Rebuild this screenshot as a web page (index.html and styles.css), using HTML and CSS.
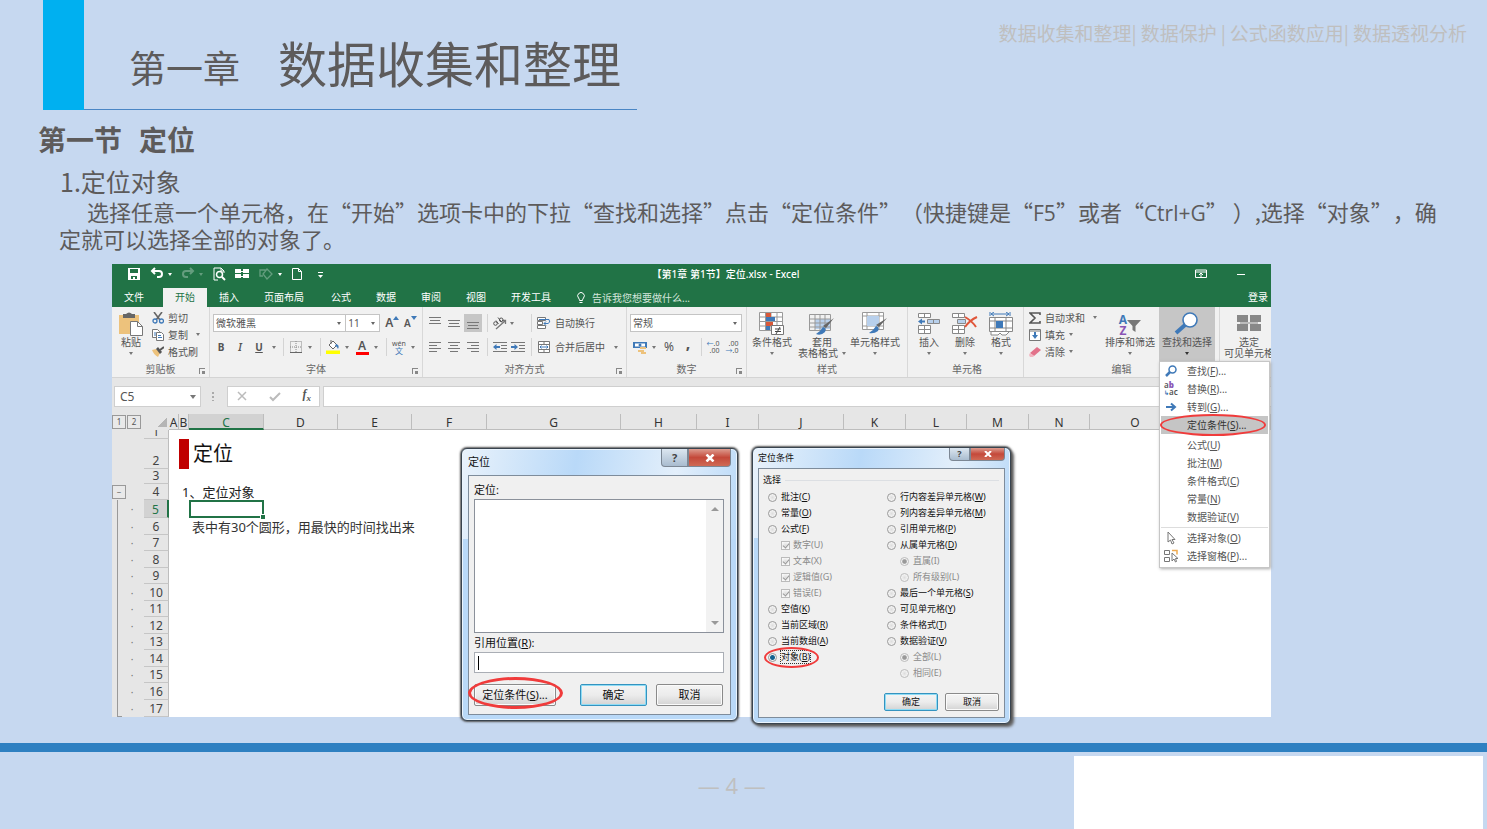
FILE: index.html
```html
<!DOCTYPE html>
<html lang="zh-CN">
<head>
<meta charset="utf-8">
<title>第一章 数据收集和整理</title>
<link rel="stylesheet" href="styles.css">
</head>
<body>
<div class="slide">
  <header class="slide-head">
    <span class="accent"></span>
    <h1 class="chapter"><span class="chapter-no">第一章</span><span>数据收集和整理</span></h1>
    <p class="topics"><span>数据收集和整理|</span><span>数据保护</span><span>|</span><span>公式函数应用|</span><span>数据透视分析</span></p>
  </header>

  <section class="lesson">
    <h2>第一节<span class="word-gap"></span>定位</h2>
    <h3>1.定位对象</h3>
    <p>选择任意一个单元格，在“开始”选项卡中的下拉“查找和选择”点击“定位条件”（快捷键是“<kbd>F5</kbd>”或者“<kbd>Ctrl+G</kbd>” ）,选择“对象”，确定就可以选择全部的对象了。</p>
  </section>

  <main class="workbook">
    <div class="titlebar">
      <div class="quick">
        <svg width="14" height="14" viewBox="0 0 14 14"><path d="M1 1h12v12H1z" fill="#fff"/><path d="M3 2h8v4H3zM4 9h6v3H8V10H6v2H4z" fill="#217346"/></svg>
        <svg width="14" height="14" viewBox="0 0 14 14"><path d="M5 1 2 4l3 3M2 4h7q3 0 3 3t-3 3H7" fill="none" stroke="#fff" stroke-width="2"/></svg>
        <i class="caret white"></i>
        <svg class="dim" width="14" height="14" viewBox="0 0 14 14"><path d="M9 1l3 3-3 3M12 4H5Q2 4 2 7t3 3h2" fill="none" stroke="#fff" stroke-width="2"/></svg>
        <i class="caret white dim"></i>
        <svg width="14" height="14" viewBox="0 0 14 14"><path d="M12 6V4L9 1H2v12h4M9 1v3h3" fill="none" stroke="#fff"/><circle cx="7.500" cy="7.500" r="3" fill="none" stroke="#fff" stroke-width="1.500"/><path d="M10 10l3 3" stroke="#fff" stroke-width="2"/></svg>
        <svg width="14" height="14" viewBox="0 0 14 14"><path d="M0 2h6v4H0zM8 2h6v4H8zM0 7h6v4H0zM8 7h6v4H8z" fill="#fff"/><path d="M5 4.500h5M5 9.500h5" stroke="#fff"/></svg>
        <svg class="dim" width="16" height="14" viewBox="0 0 16 14"><path d="M5 9H2V3h5v2M9 2l5 5-5 5-4-5z" fill="none" stroke="#fff" stroke-width="1.300"/></svg>
        <i class="caret white"></i>
        <svg width="12" height="14" viewBox="0 0 12 14"><path d="M1.500 1.500h6l3 3v8h-9zM7.500 1.500v3h3" fill="none" stroke="#fff"/></svg>
        <svg class="more" width="8" height="10" viewBox="0 0 8 10"><path d="M1 3.500h5" stroke="#fff"/><path d="M1 6h5L3.500 9z" fill="#fff"/></svg>
      </div>
      <strong class="file-name">【第1章 第1节】定位.xlsx - Excel</strong>
      <div class="window-tools">
        <svg width="12" height="10" viewBox="0 0 12 10"><path d="M.5 1h11v7.500H.5zM.5 3h11M6 8V4.500M4 6l2-2 2 2" fill="none" stroke="#fff"/></svg>
        <svg width="10" height="10" viewBox="0 0 10 10"><path d="M1 5.500h8" stroke="#fff"/></svg>
      </div>
    </div>

    <nav class="tabs">
      <a href="#">文件</a><a href="#" class="on">开始</a><a href="#">插入</a><a href="#" class="long">页面布局</a><a href="#">公式</a><a href="#">数据</a><a href="#">审阅</a><a href="#">视图</a><a href="#">开发工具</a>
      <a href="#" class="tell"><svg width="10" height="12" viewBox="0 0 10 12"><path d="M3.500 8.500Q3.500 7 2.500 6a3.300 3.300 0 1 1 5 0Q6.500 7 6.500 8.500zM3.500 10.500h3" fill="none" stroke="#fff"/></svg>告诉我您想要做什么...</a>
      <a href="#" class="login">登录</a>
    </nav>

    <div class="ribbon">
      <section class="group clip">
        <div class="body">
          <button class="big paste"><svg width="26" height="24" viewBox="0 0 26 24"><path d="M1 3h20v19H1z" fill="#edc27c"/><path d="M5 2h3q3-3 6 0h3v4H5z" fill="#666"/><path d="M12.500 9.500h7l5 5v9h-12z" fill="#fff" stroke="#777"/><path d="M19.500 9.500v5h5" fill="none" stroke="#777"/></svg><span>粘贴</span><i class="caret"></i></button>
          <div class="stack">
            <button><svg width="12" height="12" viewBox="0 0 12 12"><path d="M2 0l6 8M10 0L4 8" stroke="#666" stroke-width="1.600"/><circle cx="3" cy="9" r="2" fill="none" stroke="#3f79b8" stroke-width="1.300"/><circle cx="9.500" cy="9" r="2" fill="none" stroke="#3f79b8" stroke-width="1.300"/></svg>剪切</button>
            <button><svg width="12" height="12" viewBox="0 0 12 12"><path d="M.5.500h5l2 2v6h-7z" fill="#fff" stroke="#777"/><path d="M4.500 3.500h5l2 2v6h-7z" fill="#fff" stroke="#777"/><path d="M6 6.500h3M6 8.500h4M2 4h2M2 6h2" stroke="#3f79b8"/></svg>复制<i class="caret far"></i></button>
            <button><svg width="12" height="12" viewBox="0 0 12 12"><path d="M0 4l4-1 4 4-2 4q-4-2-6-7z" fill="#edc27c"/><path d="M4 3l2-2 4 5-2 2z" fill="#555"/><path d="M8 4l4-3" stroke="#555" stroke-width="2"/></svg>格式刷</button>
          </div>
        </div>
        <div class="caption">剪贴板<b class="corner"></b></div>
      </section>

      <section class="group font">
        <div class="body rows">
          <div class="line">
            <label class="pick face"><select aria-label="字体"><option>微软雅黑</option></select></label>
            <label class="pick size"><select aria-label="字号"><option>11</option></select></label>
            <button class="grow">A<svg width="6" height="4" viewBox="0 0 6 4"><path d="M0 4l3-4 3 4z" fill="#3f79b8"/></svg></button>
            <button class="grow small">A<svg width="6" height="4" viewBox="0 0 6 4"><path d="M0 0l3 4 3-4z" fill="#3f79b8"/></svg></button>
          </div>
          <div class="font-tools">
            <button class="bold">B</button><button class="ital">I</button><button class="under">U</button><i class="caret"></i><i class="bar"></i>
            <button aria-label="边框"><svg width="12" height="12" viewBox="0 0 12 12"><path d="M.5.500h11v11H.5zM6 0v12M0 6h12" fill="none" stroke="#888" stroke-dasharray="1 1"/><path d="M0 11.500h12" stroke="#666"/></svg></button><i class="caret"></i><i class="bar"></i>
            <button aria-label="填充颜色"><svg width="14" height="14" viewBox="0 0 14 14"><path d="M3 5l4-4 4 4-4 4z" fill="#fff" stroke="#666"/><path d="M5 4V0" stroke="#666"/><path d="M10 4q4 1 2 5-1-3-3-3z" fill="#3f79b8"/><path d="M0 10.500h14V14H0z" fill="#ff0"/></svg></button><i class="caret"></i>
            <button aria-label="字体颜色" class="ink">A</button><i class="caret"></i><i class="bar"></i>
            <button class="pinyin"><span>wén</span><span class="blue">文</span></button><i class="caret"></i>
          </div>
        </div>
        <div class="caption">字体<b class="corner"></b></div>
      </section>

      <section class="group align">
        <div class="body rows">
          <div class="align-tools">
            <button aria-label="顶端对齐"><svg width="12" height="12" viewBox="0 0 12 12"><path d="M0 .5h12M1 3.500h10M0 6.500h12" stroke="#777"/></svg></button>
            <button aria-label="垂直居中"><svg width="12" height="12" viewBox="0 0 12 12"><path d="M0 3.500h12M1 6.500h10M0 9.500h12" stroke="#777"/></svg></button>
            <button aria-label="底端对齐" class="pressed"><svg width="12" height="12" viewBox="0 0 12 12"><path d="M0 5.500h12M1 8.500h10M0 11.500h12" stroke="#777"/></svg></button>
            <i class="bar"></i>
            <button aria-label="方向"><svg width="16" height="14" viewBox="0 0 16 14"><path d="M4 13l9-8M10 4.500h3.500V8" stroke="#777" fill="none" stroke-width="1.300"/><circle cx="3.500" cy="7.500" r="1.800" fill="none" stroke="#555"/><path d="M4 4.500l2.500 3.500M6 1.500l4 5" stroke="#555"/><circle cx="9.200" cy="3.800" r="1.800" fill="none" stroke="#555"/></svg></button>
            <i class="caret mid"></i><i class="bar"></i>
            <svg width="14" height="12" viewBox="0 0 14 12"><path d="M.5.500h8v3h-8zM.5 4.500h5v3h-5zM.5 8.500h8v3h-8z" fill="#fff" stroke="#777"/><path d="M2 2.500h10q2 3-1 4H7M9 4.500l-2 2 2 2" fill="none" stroke="#3f79b8"/></svg>
            <button class="txt">自动换行</button>
          </div>
          <div class="align-tools">
            <button aria-label="左对齐"><svg width="12" height="12" viewBox="0 0 12 12"><path d="M0 1.500h12M0 4.500h8M0 7.500h12M0 10.500h8" stroke="#777"/></svg></button>
            <button aria-label="居中"><svg width="12" height="12" viewBox="0 0 12 12"><path d="M0 1.500h12M2 4.500h8M0 7.500h12M2 10.500h8" stroke="#777"/></svg></button>
            <button aria-label="右对齐"><svg width="12" height="12" viewBox="0 0 12 12"><path d="M0 1.500h12M4 4.500h8M0 7.500h12M4 10.500h8" stroke="#777"/></svg></button>
            <i class="bar"></i>
            <button aria-label="减少缩进"><svg width="14" height="12" viewBox="0 0 14 12"><path d="M0 1.500h14M8 4.500h6M8 7.500h6M0 10.500h14" stroke="#777"/><path d="M0 6l3.500-3v2H7v2H3.500v2z" fill="#3f79b8"/></svg></button>
            <button aria-label="增加缩进"><svg width="14" height="12" viewBox="0 0 14 12"><path d="M0 1.500h14M8 4.500h6M8 7.500h6M0 10.500h14" stroke="#777"/><path d="M7 6L3.500 3v2H0v2h3.500v2z" fill="#3f79b8"/></svg></button>
            <i class="bar"></i>
            <svg width="12" height="12" viewBox="0 0 12 12"><path d="M.5.500h11v11H.5zM.5 3.500h11M.5 8.500h11M6 0v3.500M6 8.500V12" fill="#fff" stroke="#777"/><path d="M2 6h8M3.500 4.500L2 6l1.500 1.500M8.500 4.500L10 6 8.500 7.500" fill="none" stroke="#3f79b8"/></svg>
            <button class="txt">合并后居中</button><i class="caret"></i>
          </div>
        </div>
        <div class="caption">对齐方式<b class="corner"></b></div>
      </section>

      <section class="group number">
        <div class="body rows">
          <div class="line"><label class="pick wide"><select aria-label="数字格式"><option>常规</option></select></label></div>
          <div class="number-tools">
            <button aria-label="货币"><svg width="14" height="13" viewBox="0 0 14 13"><path d="M0 1h14v6H0z" fill="#3f79b8"/><path d="M2 2.500h10v3H2z" fill="#fff"/><circle cx="7" cy="4" r="1.500" fill="#3f79b8"/><path d="M7 6h6v2H7zM5 9h6v2H5zM8 11h5v2H8z" fill="#edc27c"/></svg></button><i class="caret"></i>
            <button class="pct">%</button><button class="comma">,</button><i class="bar"></i>
            <button aria-label="增加小数位数" class="dec"><span><em>←</em>.0</span><span>.00</span></button>
            <button aria-label="减少小数位数" class="dec"><span>.00</span><span><em>→</em>.0</span></button>
          </div>
        </div>
        <div class="caption">数字<b class="corner"></b></div>
      </section>

      <section class="group styles">
        <div class="body">
          <button class="big"><svg width="26" height="24" viewBox="0 0 26 24"><path d="M.5.500h23v18H.5zM.5 5h23M.5 9.500h23M.5 14h23M6.500 0v19M12 0v19M18 0v19" fill="#fff" stroke="#999"/><path d="M7 1h5v4H7zM7 10h7v4H7z" fill="#d9593a"/><path d="M7 5h9v4H7zM7 14h4v4H7z" fill="#3f79b8"/><path d="M12.500 13.500h12v9h-12z" fill="#fff" stroke="#777"/><path d="M16 17h6M16 19.500h6M21 15l-4 7" stroke="#444"/></svg><span>条件格式</span><i class="caret"></i></button>
          <button class="big"><svg width="26" height="24" viewBox="0 0 26 24"><path d="M6 7h15v10H6z" fill="#b8d0ec"/><path d="M.5 2.500h21v16H.5zM.5 7h21M.5 11h21M.5 15h21M6 2v17M11 2v17M16 2v17" fill="none" stroke="#999"/><path d="M25 6l-8 10-3-2z" fill="#666"/><path d="M14 15q4 1 2 5-4 4-9 2 4-2 7-7z" fill="#3f79b8"/></svg><span>套用</span><span class="second">表格格式<i class="caret"></i></span></button>
          <button class="big"><svg width="26" height="24" viewBox="0 0 26 24"><path d="M.5.500h21v17H.5zM.5 4h21M.5 14h21M5 0v18M17 0v18" fill="#fff" stroke="#999"/><path d="M5 4h12v10H5z" fill="#b8d0ec"/><path d="M25 6l-8 9-3-2z" fill="#666"/><path d="M14 14q4 1 2 5-4 3-9 2 4-2 7-7z" fill="#3f79b8"/></svg><span>单元格样式</span><i class="caret"></i></button>
        </div>
        <div class="caption">样式</div>
      </section>

      <section class="group cells">
        <div class="body">
          <button class="big"><svg width="24" height="24" viewBox="0 0 24 24"><path d="M1.500 1.500h12v4h-12zM7.500 1v5M1.500 13.500h12v8h-12zM7.500 13v9M1 17.500h13" fill="#fff" stroke="#888"/><path d="M10.500 7.500h12v4h-12zM16.500 7v5" fill="#b8d0ec" stroke="#888"/><path d="M1 9.500l4-3v2h3v2H5v2z" fill="#3f79b8"/></svg><span>插入</span><i class="caret"></i></button>
          <button class="big"><svg width="26" height="24" viewBox="0 0 26 24"><path d="M.5 1.500h12v4H.5zM6.500 1v5M.5 13.500h12v8H.5zM6.500 13v9M0 17.500h13" fill="#fff" stroke="#888"/><path d="M5.500 7.500h8v4h-8z" fill="#b8d0ec" stroke="#888"/><path d="M13 5q7 4 11 10M25 5q-7 3-12 10" fill="none" stroke="#e0563a" stroke-width="2"/></svg><span>删除</span><i class="caret"></i></button>
          <button class="big"><svg width="24" height="24" viewBox="0 0 24 24"><path d="M.5 5.500h23v14H.5zM.5 9h23M.5 16h23M6 5v15M17 5v15" fill="#fff" stroke="#888"/><path d="M7 9h7v7H7z" fill="#3f79b8"/><path d="M1 0v4M21 0v4M2 2h18M5 0L2 2l3 2M17 0l3 2-3 2" fill="none" stroke="#3f79b8"/><path d="M2 20v3h7l2-2 2 2h4l3-3" fill="#fff" stroke="#888"/></svg><span>格式</span><i class="caret"></i></button>
        </div>
        <div class="caption">单元格</div>
      </section>

      <section class="group edit">
        <div class="body">
          <div class="stack">
            <button><svg width="12" height="12" viewBox="0 0 12 12"><path d="M11 3V1H1l5 5-5 5h10V9" fill="none" stroke="#555" stroke-width="1.600"/></svg>自动求和<i class="caret far"></i></button>
            <button><svg width="12" height="12" viewBox="0 0 12 12"><path d="M.5.500h11v11H.5z" fill="#fff" stroke="#777"/><path d="M.5 2h11" stroke="#777"/><path d="M5 3h2v3h2l-3 4-3-4h2z" fill="#3f79b8"/></svg>填充<i class="caret"></i></button>
            <button><svg width="12" height="12" viewBox="0 0 12 12"><path d="M1 7l7-6 4 3-7 6z" fill="#e2728a"/><path d="M1 7l4 3-1 1H1L0 9z" fill="#f2b4c0"/></svg>清除<i class="caret"></i></button>
          </div>
          <button class="big"><span class="sort"><span class="az"><b>A</b><b>Z</b></span><svg width="14" height="14" viewBox="0 0 14 14"><path d="M0 2h14L8.500 8v6l-3-2V8z" fill="#777"/></svg></span><span>排序和筛选</span><i class="caret"></i></button>
          <div class="find">
            <button class="big pressed"><svg width="26" height="24" viewBox="0 0 26 24"><path d="M11 13L2 21" stroke="#3f79b8" stroke-width="4"/><circle cx="16" cy="8" r="7" fill="#fff" stroke="#3f79b8" stroke-width="1.600"/></svg><span>查找和选择</span><i class="caret dark"></i></button>
            <ul class="menu">
              <li><button><svg width="14" height="14" viewBox="0 0 14 14"><path d="M6 8l-4 4" stroke="#3f79b8" stroke-width="2.500"/><circle cx="8.500" cy="5.500" r="3.500" fill="#fff" stroke="#3f79b8" stroke-width="1.500"/></svg>查找(<u>F</u>)...</button></li>
              <li><button><span class="abac"><span>a<b>b</b></span><span><em>↳</em>ac</span></span>替换(<u>R</u>)...</button></li>
              <li><button><svg width="14" height="14" viewBox="0 0 14 14"><path d="M2 7h9M7 3.500L11 7l-4 3.500" fill="none" stroke="#3f79b8" stroke-width="2"/></svg>转到(<u>G</u>)...</button></li>
              <li class="chosen"><button><i></i>定位条件(<u>S</u>)...</button><span class="ring"></span></li>
              <li><button><i></i>公式(<u>U</u>)</button></li>
              <li><button><i></i>批注(<u>M</u>)</button></li>
              <li><button><i></i>条件格式(<u>C</u>)</button></li>
              <li><button><i></i>常量(<u>N</u>)</button></li>
              <li><button><i></i>数据验证(<u>V</u>)</button></li>
              <li class="split"><button><svg width="14" height="14" viewBox="0 0 14 14"><path d="M4 1v10l2.500-2 1.500 4 2-1-2-3.500h3z" fill="#fff" stroke="#777"/></svg>选择对象(<u>O</u>)</button></li>
              <li><button><svg width="14" height="14" viewBox="0 0 14 14"><path d="M.5 1.500h5v4h-5zM.5 8.500h5v4h-5z" fill="#fff" stroke="#777"/><path d="M8 1.500h5v4" fill="none" stroke="#eeaa50" stroke-width="1.500"/><path d="M8 4v8l2-2 1.500 3 1-.5-1-3H14z" fill="#fff" stroke="#777"/></svg>选择窗格(<u>P</u>)...</button></li>
            </ul>
          </div>
        </div>
        <div class="caption">编辑</div>
      </section>

      <section class="group visible">
        <div class="body">
          <button class="big"><svg width="24" height="24" viewBox="0 0 24 24"><path d="M0 3h11v7H0zM13 3h11v7H13zM0 12h11v7H0zM13 12h11v7H13z" fill="#888"/><path d="M3 11h18" stroke="#888"/></svg><span>选定</span><span class="second">可见单元格</span></button>
        </div>
      </section>
    </div>

    <div class="formula">
      <label class="name-box"><input value="C5" aria-label="名称框"></label>
      <span class="dots"></span>
      <div class="entry-tools">
        <svg width="12" height="12" viewBox="0 0 12 12"><path d="M2 2l8 8M10 2l-8 8" stroke="#bbb" stroke-width="1.500"/></svg>
        <svg width="12" height="12" viewBox="0 0 12 12"><path d="M1 7l3 3 7-7" fill="none" stroke="#bbb" stroke-width="2"/></svg>
        <button class="fx">f<sub>x</sub></button>
      </div>
      <input class="formula-input" aria-label="编辑栏">
    </div>

    <table class="sheet">
      <colgroup><col class="w15"><col class="w17"><col class="w25"><col class="w10"><col class="w10"><col class="w75"><col class="w74"><col class="w74"><col class="w75"><col class="w134"><col class="w76"><col class="w62"><col class="w85"><col class="w62"><col class="w61"><col class="w62"><col class="w61"><col class="w91"><col></colgroup>
      <thead><tr><td class="lvl"><button>1</button></td><td class="lvl"><button>2</button></td><td class="all"></td><th>A</th><th>B</th><th class="on">C</th><th>D</th><th>E</th><th>F</th><th>G</th><th>H</th><th>I</th><th>J</th><th>K</th><th>L</th><th>M</th><th>N</th><th>O</th><th></th></tr></thead>
      <tbody>
        <tr class="r1"><td class="g" colspan="2"></td><th><span>1</span></th><td colspan="16"></td></tr>
        <tr class="r2"><td class="g" colspan="2"></td><th>2</th><td></td><td class="red"></td><td colspan="14" class="sheet-title">定位</td></tr>
        <tr class="r3"><td class="g" colspan="2"></td><th>3</th><td colspan="16"></td></tr>
        <tr class="r4"><td class="g lvl"><button>−</button></td><td class="g"></td><th>4</th><td></td><td colspan="15" class="topic">1、定位对象</td></tr>
        <tr class="r5"><td class="g rail"></td><td class="g dot">·</td><th class="on">5</th><td></td><td></td><td class="cell-on"><span></span></td><td colspan="13"></td></tr>
        <tr><td class="g rail"></td><td class="g dot">·</td><th>6</th><td></td><td></td><td colspan="14" class="task">表中有30个圆形，用最快的时间找出来</td></tr>
        <tr><td class="g rail"></td><td class="g dot">·</td><th>7</th><td colspan="16"></td></tr>
        <tr><td class="g rail"></td><td class="g dot">·</td><th>8</th><td colspan="16"></td></tr>
        <tr><td class="g rail"></td><td class="g dot">·</td><th>9</th><td colspan="16"></td></tr>
        <tr><td class="g rail"></td><td class="g dot">·</td><th>10</th><td colspan="16"></td></tr>
        <tr><td class="g rail"></td><td class="g dot">·</td><th>11</th><td colspan="16"></td></tr>
        <tr><td class="g rail"></td><td class="g dot">·</td><th>12</th><td colspan="16"></td></tr>
        <tr><td class="g rail"></td><td class="g dot">·</td><th>13</th><td colspan="16"></td></tr>
        <tr><td class="g rail"></td><td class="g dot">·</td><th>14</th><td colspan="16"></td></tr>
        <tr><td class="g rail"></td><td class="g dot">·</td><th>15</th><td colspan="16"></td></tr>
        <tr><td class="g rail"></td><td class="g dot">·</td><th>16</th><td colspan="16"></td></tr>
        <tr class="r17"><td class="g rail end"></td><td class="g dot">·</td><th>17</th><td colspan="16"></td></tr>
      </tbody>
    </table>

    <section class="dialog goto">
      <header><h4>定位</h4><button class="help">?</button><button class="close" aria-label="关闭"><svg width="10" height="8" viewBox="0 0 10 8"><path d="M1.500.500l7 7M8.500.500l-7 7" stroke="#fff" stroke-width="2.500"/></svg></button></header>
      <div class="panel">
        <label for="places">定位:</label>
        <div class="list-wrap"><select id="places" size="4"></select><span class="scroll"><i class="up"></i><i class="caret"></i></span></div>
        <label for="ref">引用位置(<u>R</u>):</label>
        <div class="ref"><i class="cursor"></i><input id="ref"></div>
        <div class="actions"><div class="circled"><button>定位条件(<u>S</u>)...</button><span class="ring"></span></div><button class="ok">确定</button><button>取消</button></div>
      </div>
    </section>

    <section class="dialog special">
      <header><h4>定位条件</h4><button class="help">?</button><button class="close" aria-label="关闭"><svg width="8" height="6" viewBox="0 0 8 6"><path d="M1 0l6 6M7 0L1 6" stroke="#fff" stroke-width="2"/></svg></button></header>
      <div class="panel">
        <div class="legend">选择</div>
        <div class="choices">
          <div>
            <label><input type="radio" name="k">批注(<u>C</u>)</label>
            <label><input type="radio" name="k">常量(<u>O</u>)</label>
            <label><input type="radio" name="k">公式(<u>F</u>)</label>
            <label class="sub"><input type="checkbox" checked disabled>数字(U)</label>
            <label class="sub"><input type="checkbox" checked disabled>文本(X)</label>
            <label class="sub"><input type="checkbox" checked disabled>逻辑值(G)</label>
            <label class="sub"><input type="checkbox" checked disabled>错误(E)</label>
            <label><input type="radio" name="k">空值(<u>K</u>)</label>
            <label><input type="radio" name="k">当前区域(<u>R</u>)</label>
            <label><input type="radio" name="k">当前数组(<u>A</u>)</label>
            <label class="circled"><input type="radio" name="k" checked><span class="focus">对象(<u>B</u>)</span><span class="ring"></span></label>
          </div>
          <div>
            <label><input type="radio" name="k">行内容差异单元格(<u>W</u>)</label>
            <label><input type="radio" name="k">列内容差异单元格(<u>M</u>)</label>
            <label><input type="radio" name="k">引用单元格(<u>P</u>)</label>
            <label><input type="radio" name="k">从属单元格(<u>D</u>)</label>
            <label class="sub"><input type="radio" name="d" checked disabled>直属(I)</label>
            <label class="sub"><input type="radio" name="d" disabled>所有级别(L)</label>
            <label><input type="radio" name="k">最后一个单元格(<u>S</u>)</label>
            <label><input type="radio" name="k">可见单元格(<u>Y</u>)</label>
            <label><input type="radio" name="k">条件格式(<u>T</u>)</label>
            <label><input type="radio" name="k">数据验证(<u>V</u>)</label>
            <label class="sub"><input type="radio" name="v" checked disabled>全部(L)</label>
            <label class="sub"><input type="radio" name="v" disabled>相同(E)</label>
          </div>
        </div>
        <div class="actions"><button class="ok">确定</button><button>取消</button></div>
      </div>
    </section>
  </main>

  <footer class="slide-foot">
    <p class="page-no">— 4 —</p>
    <div class="blank"></div>
  </footer>
</div>
</body>
</html>
```
FILE: styles.css
```css
* { box-sizing: border-box; }
body { margin: 0; background: #c6d8f0; color: #5d5b5b; font-family: "Noto Sans CJK SC", sans-serif; }
h1, h2, h3, h4, p, ul { margin: 0; padding: 0; font-weight: 400; }
button, input, select { font: inherit; color: inherit; border: 0; margin: 0; padding: 0; background: none; border-radius: 0; }
i, em { font-style: normal; }
svg { flex: none; display: block; }
a { color: inherit; text-decoration: none; }

.slide { display: flex; flex-direction: column; min-height: 100vh; }
.slide-head { display: flex; align-items: flex-start; padding-left: 43px; }
.accent { align-self: stretch; width: 41px; background: #00b0f0; }
.chapter { display: flex; align-items: baseline; gap: 38px; padding: 27px 16px 7px 45px; border-bottom: 1px solid #4a86c5; font-size: 49px; line-height: 70px; }
.chapter-no { font-size: 37px; }
.topics { display: flex; gap: 4px; margin-left: auto; padding: 19px 20px 0 0; color: #bfbfbf; font-size: 19px; line-height: 28px; white-space: nowrap; }

.lesson { padding: 9px 36px 0 38px; }
.lesson h2 { font-size: 28px; line-height: 40px; font-weight: 700; }
.word-gap { display: inline-block; width: 17px; }
.lesson h3 { padding: 7px 0 2px 22px; font-size: 25px; line-height: 30px; }
.lesson p { padding-left: 21px; text-indent: 28px; font-size: 22px; line-height: 27px; text-spacing-trim: space-all; }
kbd { font-family: "Open Sans", sans-serif; font-size: 21px; line-height: 1; }

.workbook { position: relative; margin: 12px 216px 26px 112px; background: #fff; font-family: "Noto Sans", "Noto Sans CJK SC", sans-serif; font-size: 10px; line-height: 14px; color: #555; white-space: nowrap; }
.titlebar { display: grid; grid-template-columns: 1fr auto 1fr; align-items: center; height: 20px; background: #217346; color: #fff; }
.quick { display: flex; align-items: center; padding-left: 6px; }
.quick svg { margin-left: 9px; }
.quick .caret { margin-left: 4px; }
.quick .more { margin-left: 14px; }
.file-name { font-weight: 500; padding-left: 68px; }
.window-tools { display: flex; justify-content: flex-end; gap: 29px; padding-right: 25px; }
.dim { opacity: .3; }
.caret { display: inline-block; flex: none; justify-self: center; width: 0; height: 0; border: 2px solid transparent; border-top: 3px solid #777; border-bottom: 0; }
.caret.white { border-top-color: #fff; }
.caret.dark { border-top-color: #333; }
.caret.mid { justify-self: start; margin-left: 2px; }

.tabs { display: flex; height: 23px; padding: 4px 3px 0 0; background: #217346; color: #fff; line-height: 18px; }
.tabs a { padding: 0 13px 0 12px; }
.tabs .on { background: #f1f1f1; color: #217346; padding: 0 12px; margin-left: 6px; }
.tabs .long { padding-right: 15px; }
.tabs .tell { display: flex; align-items: center; gap: 6px; padding-left: 12px; color: #d5e6dc; }
.tabs .login { margin-left: auto; padding: 0; }

.ribbon { display: flex; height: 71px; background: #f1f1f1; border-bottom: 1px solid #d4d4d4; }
.group { display: flex; flex-direction: column; flex: none; border-right: 1px solid #d8d8d8; }
.group .body { display: flex; flex: 1; }
.group .rows { flex-direction: column; padding: 4px 0 0 3px; }
.rows > div { height: 24px; align-items: center; }
.caption { position: relative; height: 16px; line-height: 17px; text-align: center; color: #666; }
.corner { position: absolute; right: 4px; bottom: 3px; width: 6px; height: 6px; border-left: 1px solid #888; border-top: 1px solid #888; background: linear-gradient(#888, #888) right bottom / 3px 3px no-repeat; }
.clip { width: 98px; }
.font { width: 213px; }
.align { width: 204px; }
.number { width: 120px; }
.styles { width: 161px; }
.cells { width: 116px; padding-left: 3px; }
.edit { width: 196px; }
.visible { flex: 1; border: 0; overflow: hidden; }
.big { display: flex; flex-direction: column; align-items: center; flex: none; width: 50px; padding-top: 5px; line-height: 11px; }
.big > svg { margin-bottom: 1px; }
.big > .caret { margin-top: 4px; }
.big .second { display: flex; align-items: center; gap: 4px; }
.paste { width: 38px; }
.styles .big:last-child { width: 56px; }
.cells .big { width: 36px; }
.visible .big { width: 58px; }
.edit .big { width: 56px; }
.edit .stack { width: 78px; padding-left: 5px; }
.sort { display: flex; align-items: center; height: 25px; }
.az { display: flex; flex-direction: column; font-size: 12px; line-height: 11px; color: #3f79b8; }
.az b + b { color: #8a55b5; }
.find { position: relative; padding-left: 1px; }
.find .pressed { height: 54px; }
.pressed { background: #c6c6c6; }
.stack { padding: 2px 0 0 2px; }
.stack button { display: flex; align-items: center; gap: 4px; height: 17px; }
.stack .far { margin-left: 4px; }
.line { display: flex; }
.pick { position: relative; display: flex; height: 18px; background: #fff; border: 1px solid #c4c4c4; }
.pick select { appearance: none; width: 100%; padding-left: 2px; outline: 0; }
.pick::after { content: ""; position: absolute; right: 4px; top: 7px; border: 2px solid transparent; border-top: 3px solid #666; border-bottom: 0; }
.face { width: 134px; }
.size { width: 34px; border-left: 0; }
.wide { width: 112px; }
.grow { display: flex; align-items: flex-start; width: 18px; margin-left: 5px; font-size: 12px; font-weight: 600; }
.grow.small { margin-left: 1px; font-size: 10px; }
.font-tools, .align-tools, .number-tools { display: grid; justify-items: center; }
.font-tools { grid-template-columns: 18px 20px 18px 12px 6px 20px 8px 12px 14px 14px 16px 12px 8px 18px 10px; margin-left: -1px; }
.align-tools { grid-template-columns: 18px 20px 18px 10px 16px 20px 6px 20px auto 1fr; }
.number-tools { grid-template-columns: 20px 8px 22px 16px 10px 14px 24px; }
.bar { width: 1px; height: 18px; background: #d4d4d4; }
.bold { font-weight: 700; }
.ital { font-style: italic; font-weight: 600; }
.under { font-weight: 700; text-decoration: underline; }
.ink { width: 13px; border-bottom: 3px solid #f00; font-size: 12px; line-height: 12px; font-weight: 600; }
.pinyin { display: flex; flex-direction: column; align-items: center; font-size: 7px; line-height: 7px; }
.blue { color: #3f79b8; font-size: 8px; }
.align .pressed { width: 18px; height: 18px; display: grid; place-items: center; }
.txt { padding-left: 1px; }
.pct { font-size: 12px; }
.comma { font-size: 16px; font-weight: 700; line-height: 10px; padding-bottom: 8px; }
.dec { display: flex; flex-direction: column; align-items: flex-end; font-size: 7px; line-height: 7px; }
.dec em { color: #3f79b8; }

.menu { position: absolute; z-index: 3; left: 1px; top: 54px; width: 111px; padding: 0 1px 2px; list-style: none; background: #fff; border: 1px solid #c6c6c6; box-shadow: 1px 1px 3px #aaa; }
.menu li { position: relative; }
.menu button { display: flex; align-items: center; width: 100%; height: 18px; padding-left: 3px; }
.menu svg { margin-right: 9px; }
.menu button > i { width: 23px; }
.menu .chosen { background: #c5c5c5; margin-bottom: 2px; color: #333; }
.menu .split { border-top: 1px solid #ddd; margin-top: 1px; padding-top: 1px; }
.abac { display: flex; flex-direction: column; width: 14px; margin-right: 9px; font-size: 8px; line-height: 7px; font-weight: 600; text-align: left; }
.abac b { color: #8a55b5; }
.abac em { color: #3f79b8; font-size: 6px; }
.ring { position: absolute; inset: -2px 2px -2px -1px; border: 2px solid #f03b3b; border-radius: 50%; pointer-events: none; }

.formula { display: flex; align-items: center; height: 36px; padding-left: 2px; background: #e6e6e6; }
.name-box { position: relative; width: 87px; }
.name-box::after { content: ""; position: absolute; right: 5px; top: 9px; border: 3px solid transparent; border-top: 4px solid #777; border-bottom: 0; }
.formula input, .entry-tools { height: 21px; background: #fff; border: 1px solid #cfcfcf; }
.name-box input { display: block; width: 100%; padding-left: 5px; font-size: 12px; }
.dots { width: 2px; height: 9px; margin: 0 13px 0 11px; background: repeating-linear-gradient(#aaa 0 2px, transparent 2px 4px); }
.entry-tools { display: flex; align-items: center; justify-content: space-between; width: 93px; padding: 0 8px; margin-right: 3px; }
.fx { font-family: "Liberation Serif", serif; font-style: italic; font-weight: 700; font-size: 12px; }
.fx sub { font-size: 9px; }
.formula .formula-input { flex: 1; min-width: 0; border-right: 0; }

.sheet { width: 100%; table-layout: fixed; border-collapse: separate; border-spacing: 0; }
.sheet td, .sheet th { padding: 0; font-weight: 400; line-height: 14px; }
.w10 { width: 10px; } .w15 { width: 15px; } .w17 { width: 17px; } .w25 { width: 25px; } .w61 { width: 61px; } .w62 { width: 62px; } .w74 { width: 74px; } .w75 { width: 75px; } .w76 { width: 76px; } .w85 { width: 85px; } .w91 { width: 91px; } .w134 { width: 134px; }
.sheet thead td, .sheet thead th { height: 15px; background: #e6e6e6; }
.sheet thead th { padding-top: 2px; border-right: 1px solid #bdbdbd; border-bottom: 1px solid #bdbdbd; font-size: 12px; line-height: 12px; color: #333; }
.sheet thead .on { background: #d2d2d2; border-bottom: 2px solid #217346; color: #217346; line-height: 11px; }
.sheet thead .all { background: linear-gradient(135deg, transparent 50%, #b5b5b5 50%) 13px 3px / 10px 10px no-repeat #e6e6e6; }
.lvl button { display: block; width: 14px; height: 14px; border: 1px solid #999; font-size: 8px; line-height: 12px; text-align: center; background: #e9e9e9; }
.sheet tbody tr { height: 17px; }
.sheet tr:nth-child(odd) { height: 16px; }
.sheet tbody th { background: #e6e6e6; border-right: 1px solid #bdbdbd; border-bottom: 1px solid #c6c6c6; font-size: 12px; color: #444; vertical-align: bottom; }
.sheet .g { background: #e6e6e6; }
.sheet .r1 td, .sheet .r1 th { line-height: 0; }
.r1 span { display: flex; align-items: flex-end; justify-content: center; height: 8px; overflow: hidden; line-height: 12px; }
.sheet tbody .r1 { height: 9px; }
.sheet tbody .r2 { height: 30px; }
.sheet tbody .r3 { height: 15px; }
.sheet tbody .r4 { height: 16px; }
.sheet tbody .r5 { height: 18px; }
.sheet tbody .r17 { height: 17px; }
.sheet tbody .on { background: #d2d2d2; border-right: 2px solid #217346; color: #217346; }
.sheet .rail { background: linear-gradient(#999, #999) 5px 0 / 1px 100% no-repeat #e6e6e6; }
.sheet .rail.end { background: linear-gradient(#999, #999) 5px 0 / 1px 100% no-repeat, linear-gradient(#999, #999) 5px 100% / 5px 1px no-repeat #e6e6e6; }
.sheet .dot { padding-right: 7px; text-align: center; color: #777; }
.red { background: #c00000; }
.sheet .sheet-title { padding-left: 4px; font-size: 20px; line-height: 28px; color: #111; }
.sheet .topic { padding-left: 3px; font-size: 13px; color: #222; }
.sheet .task { padding-left: 3px; font-size: 13px; color: #333; }
.cell-on { position: relative; border: 2px solid #217346; }
.cell-on span { position: absolute; right: -3px; bottom: -3px; width: 5px; height: 5px; background: #217346; border: solid #fff; border-width: 1px 0 0 1px; }

.dialog { position: absolute; z-index: 2; border: 1px solid #39444f; border-radius: 6px; background: linear-gradient(100deg, #e9f2fb, #b9d9f8 40%, #e3effb 75%, #b9d9f8) top / 100% 90px no-repeat #b9d9f8; box-shadow: 0 0 2px 1px #555, inset 0 0 0 1px #eaf4fd; color: #111; }
.dialog header { display: flex; align-items: flex-start; }
.dialog h4 { flex: 1; }
.dialog .panel { background: #f0f0f0; border: 1px solid #7e8c9b; }
.dialog header button { border: 1px solid #7c8794; border-top: 0; background: linear-gradient(#dce6f0, #a9bccf); color: #444; display: grid; place-items: center; }
.dialog .help { border-radius: 0 0 0 4px; font-weight: 700; }
.dialog header .close { border-radius: 0 0 4px 0; background: linear-gradient(#dd9c8f, #c4493a 50%, #cf6a55); }
.panel button { border: 1px solid #8a8a8a; border-radius: 2px; background: linear-gradient(#f4f4f4, #ececec 50%, #d3d3d3); box-shadow: inset 0 0 0 1px #fbfbfb; }
.panel .ok { border-color: #3593bf; box-shadow: inset 0 0 0 1px #8fdcf5; }
.circled { position: relative; }

.goto { left: 349px; top: 184px; width: 277px; padding: 0 6px 5px; font-size: 11px; }
.goto h4 { line-height: 26px; }
.goto .help { width: 27px; height: 18px; }
.goto .close { width: 43px; height: 18px; }
.goto .panel { padding: 4px 6px 8px 5px; }
.goto .panel label { display: block; line-height: 19px; }
.list-wrap { display: flex; height: 134px; border: 1px solid #8b919b; background: #fff; }
.list-wrap select { flex: 1; overflow: hidden; outline: 0; }
.scroll { display: flex; flex-direction: column; align-items: center; justify-content: space-between; width: 17px; padding: 7px 0; background: #f2f2f2; }
.scroll i { border-width: 4px; border-top-color: #999; border-bottom: 0; }
.scroll .up { border: 4px solid transparent; border-top: 0; border-bottom-color: #999; }
.ref { display: flex; align-items: center; height: 21px; padding-left: 3px; background: #fff; border: 1px solid #aaaeb5; }
.ref input { flex: 1; outline: 0; }
.cursor { width: 1px; height: 14px; background: #000; }
.actions { display: flex; }
.goto .actions { padding-top: 11px; gap: 9px; }
.goto .actions button { width: 67px; height: 22px; }
.goto .circled { margin-right: 15px; }
.goto .circled button { width: 82px; }
.goto .ring { inset: -7px -7px -3px -6px; border-width: 3px; }

.special { left: 640px; top: 183px; width: 259px; padding: 0 5px 5px; font-size: 9px; box-shadow: 0 0 2px 1px #555, 3px 3px 3px #666, inset 0 0 0 1px #eaf4fd; }
.special h4 { line-height: 20px; }
.special .help { width: 21px; height: 13px; line-height: 10px; }
.special .close { width: 35px; height: 13px; }
.special .panel { padding: 3px 5px 6px 4px; }
.legend { display: flex; align-items: center; gap: 4px; line-height: 16px; }
.legend::after { content: ""; flex: 1; border-top: 1px solid #dcdfe3; }
.choices { display: grid; grid-template-columns: 119px 1fr; padding: 1px 0 0 5px; }
.choices label { display: flex; align-items: center; width: max-content; height: 16px; }
.choices .sub { padding-left: 13px; color: #8a8a8a; }
.choices input { appearance: none; flex: none; width: 9px; height: 9px; margin-right: 3px; border: 1px solid #999; background: radial-gradient(#ddd, #fff); }
.choices input[type=radio] { border-radius: 50%; margin-right: 4px; }
.choices input[type=radio]:checked { background: radial-gradient(#14618f 40%, #f4f4f4 60%); }
.choices input:disabled { border-color: #bbb; }
.choices input[type=radio]:checked:disabled { background: radial-gradient(#999 35%, #f4f4f4 60%); }
.choices input[type=checkbox]::before { content: ""; display: block; width: 3px; height: 5px; margin: 0 auto; border: solid #999; border-width: 0 1px 1px 0; rotate: 40deg; }
.focus { outline: 1px dotted #333; line-height: 12px; }
.special .ring { inset: -2px -9px -3px -4px; }
.special .actions { justify-content: flex-end; gap: 7px; padding: 12px 0 0; }
.special .actions button { width: 54px; height: 18px; }

.slide-foot { flex: 1; display: grid; grid-template-columns: 26.3% 1fr 27.6%; padding: 4px 4px 0 0; border-top: 9px solid #2e80c1; min-height: 87px; }
.page-no { grid-column: 2; text-align: center; color: #bfbfbf; font-family: "Open Sans", sans-serif; font-size: 22px; line-height: 58px; }
.blank { background: #fff; }
```
